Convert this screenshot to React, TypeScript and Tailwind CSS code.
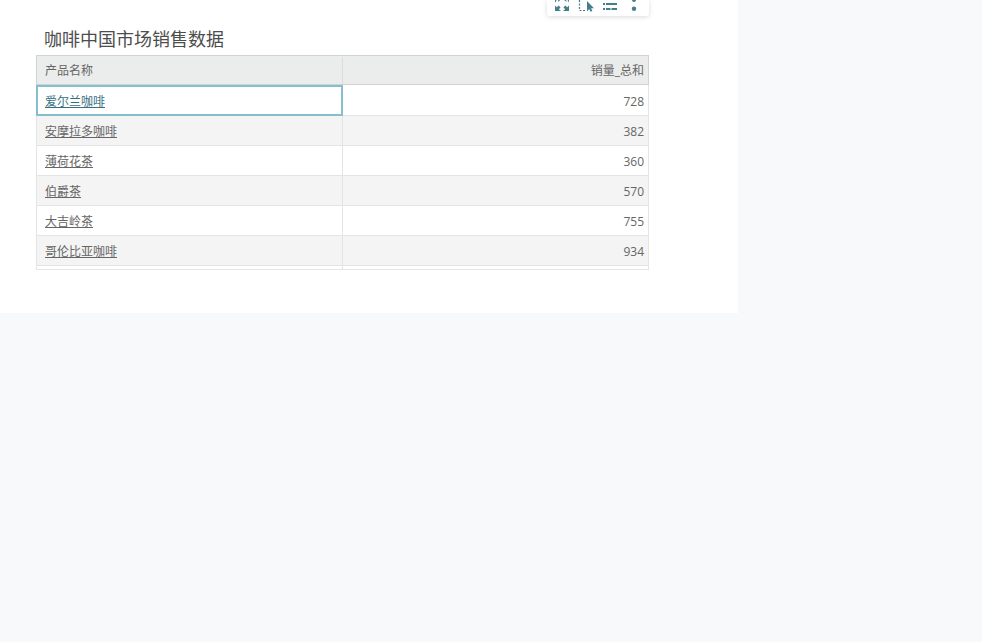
import React from "react";

interface Row {
  name: string;
  sales: number;
}

const rows: Row[] = [
  { name: "爱尔兰咖啡", sales: 728 },
  { name: "安摩拉多咖啡", sales: 382 },
  { name: "薄荷花茶", sales: 360 },
  { name: "伯爵茶", sales: 570 },
  { name: "大吉岭茶", sales: 755 },
  { name: "哥伦比亚咖啡", sales: 934 },
];

const Toolbar: React.FC = () => (
  <div className="absolute left-[547px] top-0 h-[16px] w-[102px] rounded-b-[3px] bg-white text-[#44808c] shadow-[0_1px_5px_rgba(0,0,0,0.15)]">
    {/* cropped at the top of the page, same as the screenshot */}
    <svg width="102" height="16" viewBox="0 0 102 16" fill="none">
      <g fill="currentColor">
        {/* expand */}
        <path d="M8 0h1.5L9 1.5 8 2.5z" />
        <path d="M11 0h2l-1.5 2z" />
        <path d="M17 0h2l1 2z" />
        <path d="M20.5 0H22v2.5z" />
        <path d="M8 11V5.5l1.8 1.8L11.6 5.5l2 2-1.8 1.8L14 11z" />
        <path d="M22 11V5.5l-1.8 1.8L18.4 5.5l-2 2 1.8 1.8L16 11z" />
        {/* cursor */}
        <path d="M40 1v10.5l2.2-2.4 1.4 2.6 1.8-1-1.4-2.5H47z" />
      </g>
      {/* selection frame */}
      <path d="M32.5 0v10.5H38" stroke="currentColor" strokeWidth="1.2" strokeDasharray="2 1.5" />
      <g fill="currentColor">
        {/* list */}
        <rect x="56" y="3" width="2" height="2" />
        <rect x="59" y="3" width="11" height="2" />
        <rect x="56" y="8" width="2" height="2" />
        <rect x="59" y="8" width="4.5" height="2" />
        <rect x="64.5" y="8" width="5.5" height="2" />
        {/* more */}
        <circle cx="87" cy="0" r="2" />
        <circle cx="87" cy="8.7" r="2.2" />
      </g>
    </svg>
  </div>
);

export default function App() {
  return (
    <div className="relative h-[642px] w-[982px] overflow-hidden bg-[#f8f9fb] font-['Open_Sans','Noto_Sans_CJK_SC',sans-serif]">
      <div className="h-[313px] w-[738px] bg-white pl-[36px] pt-[27px]">
        <h1 className="h-[28px] pl-[8px] text-[18px] leading-[24px] font-normal text-[#4d4d4d]">
          咖啡中国市场销售数据
        </h1>

        <div className="h-[215px] w-[613px] overflow-hidden border-b border-[#e6e6e6]">
          <div className="flex h-[30px] border border-[#d2d2d2] bg-[#ebecec] pt-px text-[12px] text-[#666]">
            <div className="flex w-[306px] items-center border-r border-[#dcdcdc] pl-[8px]">产品名称</div>
            <div className="flex flex-1 items-center justify-end pr-[4px]">销量_总和</div>
          </div>

          {rows.map((row, idx) => (
            <div
              key={row.name}
              className={`flex border-x border-b border-[#e4e4e4] text-[12px] text-[#666] ${
                idx === 0 ? "h-[31px]" : "h-[30px]"
              } ${idx % 2 === 1 ? "bg-[#f4f4f4]" : "bg-white"}`}
            >
              <div
                className={`flex items-center pt-[3px] ${
                  idx === 0
                    ? "-mb-px -ml-px w-[307px] border-2 border-[#84bfcd] pl-[7px] text-[#36707f]"
                    : "w-[306px] border-r border-[#e4e4e4] pl-[8px]"
                }`}
              >
                <span className="underline underline-offset-1">{row.name}</span>
              </div>
              <div className="flex flex-1 items-center justify-end pt-[3px] pr-[4px]">{row.sales}</div>
            </div>
          ))}

          <div className="flex h-[3px] border-x border-[#e4e4e4] bg-white">
            <div className="w-[306px] border-r border-[#e4e4e4]" />
          </div>
        </div>
      </div>
      <Toolbar />
    </div>
  );
}
